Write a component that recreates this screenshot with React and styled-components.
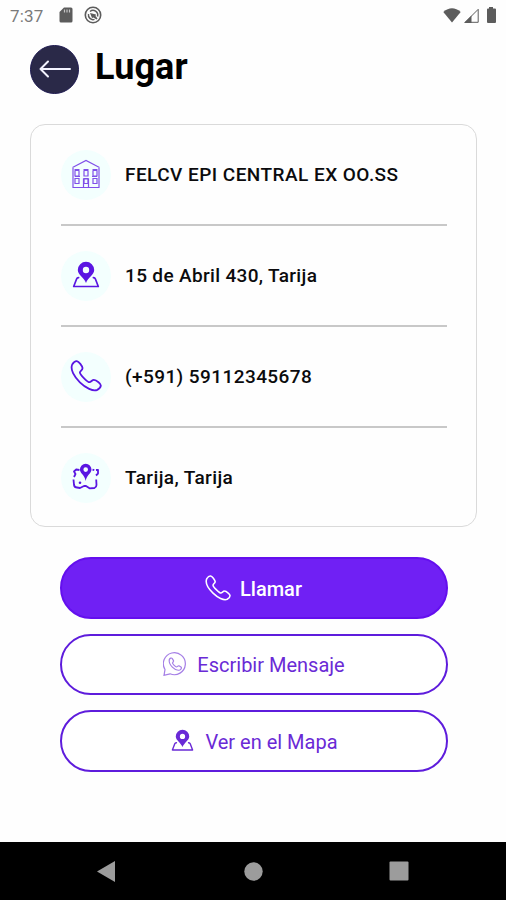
import React from "react";
import styled, { createGlobalStyle } from "styled-components";

const GlobalStyle = createGlobalStyle`
  * { box-sizing: border-box; }
  body { margin: 0; background: #fff; }
`;

const Screen = styled.div`
  width: 506px;
  height: 900px;
  display: flex;
  flex-direction: column;
  overflow: hidden;
  background: #fefefe;
  color: #0b0b0d;
  font-family: Roboto, sans-serif;
`;

const StatusBar = styled.header`
  height: 31px;
  display: flex;
  align-items: center;
  padding: 0 6px 0 10px;
  flex: none;
`;

const Clock = styled.time`
  width: 49px;
  font-size: 17px;
  line-height: 20px;
  letter-spacing: 0.15px;
  color: #7a7a7a;
`;

const StatusIcons = styled.div`
  display: flex;
  align-items: center;
  gap: ${(p) => p.$gap}px;
  margin-left: ${(p) => (p.$end ? "auto" : 0)};
  padding-bottom: 1px;
  color: #5c5c5c;
  svg { display: block; }
`;

const TitleBar = styled.div`
  display: flex;
  align-items: center;
  gap: 16px;
  height: 50px;
  margin: 13px 30px 30px;
  flex: none;
`;

const BackButton = styled.button`
  width: 49px;
  height: 49px;
  padding: 0;
  border: 1px solid #1d1950;
  border-radius: 50%;
  background: #2a2948;
  color: #f3f3ff;
  svg { display: block; margin: auto; }
`;

const Title = styled.h1`
  margin: 0 0 4px;
  font-size: 36px;
  line-height: 44px;
  font-weight: 700;
  letter-spacing: 0.1px;
  color: #000;
`;

const Card = styled.ul`
  list-style: none;
  margin: 0 29px 0 30px;
  padding: 0 29.5px;
  height: 403px;
  flex: none;
  border: 1.5px solid #dadada;
  border-radius: 15px;
`;

const Row = styled.li`
  display: flex;
  align-items: center;
  gap: 14.5px;
  height: 101px;
  border-bottom: 2px solid #c8c8c8;
  &:last-child { border-bottom-color: transparent; }
`;

const IconDisc = styled.span`
  width: 50px;
  height: 50px;
  padding-bottom: 2px;
  flex: none;
  display: grid;
  place-items: center;
  border-radius: 50%;
  background: #f3fffe;
  color: #5a16e2;
  svg { display: block; }
`;

const RowText = styled.span`
  font-size: 19px;
  line-height: 24px;
  font-weight: 500;
  letter-spacing: ${(p) => p.$tracking}px;
  padding-top: 1px;
  white-space: nowrap;
`;

const Actions = styled.div`
  display: flex;
  flex-direction: column;
  gap: 15px;
  margin: 30px 58.5px 0 59.5px;
`;

const ActionButton = styled.button`
  height: 61.5px;
  display: flex;
  align-items: center;
  justify-content: center;
  gap: ${(p) => p.$gap}px;
  padding: 2px 0 0 ${(p) => p.$shift || 0}px;
  border: 2.5px solid ${(p) => (p.$filled ? "#640fee" : "#5e1cdc")};
  border-radius: 31px;
  background: ${(p) => (p.$filled ? "#7020f4" : "#fff")};
  color: ${(p) => (p.$filled ? "#fff" : "#6a2ad6")};
  font: ${(p) => (p.$filled ? 500 : 400)} 20px/24px Roboto, sans-serif;
  svg { flex: none; margin-bottom: 2px; }
`;

const NavBar = styled.nav`
  height: 58px;
  margin-top: auto;
  flex: none;
  display: flex;
  align-items: center;
  justify-content: space-between;
  padding: 0 97px 0 96px;
  background: #000;
  color: #9c9c9c;
  svg { display: block; }
`;

const PhoneIcon = ({ size, stroke = 1.8 }) => (
  <svg width={size} height={size} viewBox="0 0 32 32" fill="none" stroke="currentColor" strokeWidth={stroke} strokeLinejoin="round">
    <path d="M2.2 4.5C3.3 2.8 5 1 6.8 1.2c2.2.3 5.3 4.7 5.7 6.8.3 1.8-2.4 2.900-2.600 4.400-.2 2 7.600 9.800 9.600 9.800 1.600 0 2.800-2.700 4.600-2.400 2.100.3 6.600 3.500 6.700 5.600.1 1.900-1.800 3.600-3.500 4.500C18.700 33.500-2.200 14.500 2.200 4.500Z" />
  </svg>
);

const PinMapIcon = ({ size }) => (
  <svg width={size} height={size} viewBox="0 0 28 28">
    <path fill="currentColor" fillRule="evenodd" d="M14 .8a8.200 8.200 0 0 0-8.200 8.200c0 4.600 6.200 7.500 8.200 13 2-5.500 8.200-8.400 8.200-13A8.200 8.200 0 0 0 14 .8Zm0 5a3.200 3.200 0 1 1 0 6.400 3.200 3.200 0 0 1 0-6.400Z" />
    <path fill="none" stroke="currentColor" strokeWidth="1.700" strokeLinejoin="round" d="M7.300 16.800Q5.300 16.200 4.600 18L1.700 25.500h24.600L23.400 18q-.7-1.800-2.700-1.200" />
  </svg>
);

const BuildingIcon = () => (
  <svg width="30" height="30" viewBox="0 0 30 30" fill="none" stroke="currentColor" strokeWidth="1.200" opacity=".75">
    <path d="M2 9v19.500h26V9M1.500 8.500 15 1.500l13.500 7" />
    {[3.5, 12.5, 21.5].map((x) => (
      <g key={x}>
        <path d={`M${x} 11h5`} strokeWidth="2" />
        <path d={`M${x + 0.5} 12v5h4v-5M${x + 0.5} 19.500h4v5h-4Z`} />
      </g>
    ))}
    <path d="M12.500 28v-8h5v8M4 17.500h5M21 17.500h5" />
  </svg>
);

const RegionIcon = () => (
  <svg width="30" height="30" viewBox="0 0 30 30">
    <path fill="none" stroke="currentColor" strokeWidth="1.800" strokeLinejoin="round" d="M8.500 8 5.200 7.500 3 9.500 4.500 12 3 15M2.500 17.500 3 23q.5 2.500 3 2.500l3 .5 4-2h2l3.500 2.300 5-.3q2-.8 2-3l-.3-5.500M21.500 7.700l1.800.5M25 8l2-.2v3.700l-2 2" />
    <path fill="currentColor" fillRule="evenodd" d="M14.700 1.800A5.800 5.800 0 0 0 8.900 7.600c0 3.900 4.600 5 5.800 11.400 1.200-6.400 5.800-7.500 5.800-11.400a5.800 5.800 0 0 0-5.800-5.800Zm0 3.500a2.300 2.300 0 1 1 0 4.600 2.300 2.300 0 0 1 0-4.600Z" />
    <circle cx="9" cy="20.800" r="1.300" fill="currentColor" />
  </svg>
);

const ChatIcon = () => (
  <svg width="24" height="24" viewBox="0 0 24 24" fill="none" stroke="currentColor" strokeWidth="1.200" opacity=".6">
    <path d="M1 23.300 2 17.500A11 11 0 1 1 7 21.800Z" />
    <path d="M6.300 7.500C7 6 8.500 5.500 9.300 6.600l1.200 2c.5 1-.9 1.700-1 2.500 0 .8 3.100 3.900 4 3.900.8 0 1.500-1.600 2.400-1.200l2.100 1.300c1 .7.200 2.200-1.200 2.900C12 19.500 5.200 12.500 6.300 7.500Z" />
  </svg>
);

const places = [
  { text: "FELCV EPI CENTRAL EX OO.SS", icon: <BuildingIcon />, tracking: 0.46 },
  { text: "15 de Abril 430, Tarija", icon: <PinMapIcon size={28} />, tracking: 0.34 },
  { text: "(+591) 59112345678", icon: <PhoneIcon size={32} />, tracking: 0.42 },
  { text: "Tarija, Tarija", icon: <RegionIcon />, tracking: 0.38 },
];

export default function App() {
  return (
    <Screen>
      <GlobalStyle />
      <StatusBar>
        <Clock>7:37</Clock>
        <StatusIcons $gap={11}>
          <svg width="14" height="16" viewBox="0 0 14 16">
            <path fill="currentColor" d="M5 .5h7q1.500 0 1.500 1.500v12q0 1.500-1.500 1.500H2Q.5 15.500.5 14V5Z" />
            <path stroke="#c4c4c4" strokeWidth="1.200" d="M5.500 2.500v3M8 2.500v3M10.500 2.500v3" />
          </svg>
          <svg width="18" height="18" viewBox="0 0 18 18" fill="none" stroke="currentColor">
            <circle cx="9" cy="9" r="7.700" strokeWidth="1.600" />
            <path strokeWidth="1.500" d="M13.500 10.500A4.700 4.700 0 0 0 6 5.500M4.500 8A4.700 4.700 0 0 0 10.500 13.400" />
            <path fill="currentColor" stroke="none" d="m6 7 6 1.500-.5 1.500 2 2.500-1 1-3-2-1.500.5Z" />
          </svg>
        </StatusIcons>
        <StatusIcons $end $gap={3}>
          <svg width="18" height="15" viewBox="0 0 18 15"><path fill="currentColor" d="M9 14.500.3 4Q9-3.500 17.700 4Z" /></svg>
          <svg width="15" height="15" viewBox="0 0 15 15">
            <path fill="none" stroke="currentColor" d="M14.200 1.300v13H1.200Z" />
            <path fill="currentColor" d="M7.500 7.500V15H0Z" />
          </svg>
          <svg width="18" height="16" viewBox="0 0 18 16"><path fill="currentColor" d="M7 0h4v1.500h2q1 0 1 1v12.500q0 1-1 1H6q-1 0-1-1V2.500q0-1 1-1h1Z" /></svg>
        </StatusIcons>
      </StatusBar>
      <TitleBar>
        <BackButton aria-label="Volver">
          <svg width="32" height="18" viewBox="0 0 32 18" fill="none" stroke="currentColor" strokeWidth="2" strokeLinecap="round" strokeLinejoin="round">
            <path d="M31 9H1.500M9 1.500 1.500 9 9 16.500" />
          </svg>
        </BackButton>
        <Title>Lugar</Title>
      </TitleBar>
      <Card>
        {places.map((p) => (
          <Row key={p.text}>
            <IconDisc>{p.icon}</IconDisc>
            <RowText $tracking={p.tracking}>{p.text}</RowText>
          </Row>
        ))}
      </Card>
      <Actions>
        <ActionButton $filled $gap={9}>
          <PhoneIcon size={26} stroke={1.9} />
          <span>Llamar</span>
        </ActionButton>
        <ActionButton $gap={10} $shift={1}>
          <ChatIcon />
          <span>Escribir Mensaje</span>
        </ActionButton>
        <ActionButton $gap={11} $shift={2}>
          <PinMapIcon size={23} />
          <span>Ver en el Mapa</span>
        </ActionButton>
      </Actions>
      <NavBar>
        <svg width="19" height="21" viewBox="0 0 19 21"><path fill="currentColor" d="M19 0v21L1 10.500Z" /></svg>
        <svg width="21" height="19" viewBox="0 0 21 19"><circle cx="11.500" cy="9.500" r="9.200" fill="currentColor" /></svg>
        <svg width="20" height="20" viewBox="0 0 20 20"><rect x=".5" y=".5" width="19" height="19" rx="1" fill="currentColor" /></svg>
      </NavBar>
    </Screen>
  );
}
